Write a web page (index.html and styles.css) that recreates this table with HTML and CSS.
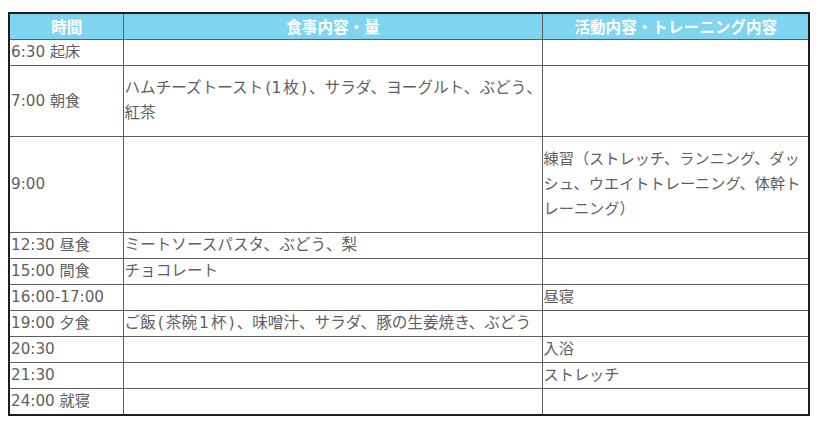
FILE: index.html
```html
<!DOCTYPE html>
<html lang="ja">
<head>
<meta charset="utf-8">
<link rel="stylesheet" href="styles.css">
</head>
<body>
<table class="schedule">
  <colgroup>
    <col class="c-time">
    <col class="c-meal">
    <col class="c-act">
  </colgroup>
  <thead>
    <tr class="head">
      <th>時間</th>
      <th>食事内容・量</th>
      <th>活動内容・トレーニング内容</th>
    </tr>
  </thead>
  <tbody>
    <tr><td>6:30 起床</td><td></td><td></td></tr>
    <tr class="tall2"><td>7:00 朝食</td><td>ハムチーズトースト<span class="hw">(1</span>枚<span class="hw">)</span>、サラダ、ヨーグルト、ぶどう、<br>紅茶</td><td></td></tr>
    <tr class="tall3"><td>9:00</td><td></td><td>練習（ストレッチ、ランニング、ダッ<br>シュ、ウエイトトレーニング、体幹ト<br>レーニング）</td></tr>
    <tr><td>12:30 昼食</td><td>ミートソースパスタ、ぶどう、梨</td><td></td></tr>
    <tr><td>15:00 間食</td><td>チョコレート</td><td></td></tr>
    <tr><td>16:00-17:00</td><td></td><td>昼寝</td></tr>
    <tr><td>19:00 夕食</td><td>ご飯<span class="hw">(</span>茶碗<span class="hw">1</span>杯<span class="hw">)</span>、味噌汁、サラダ、豚の生姜焼き、ぶどう</td><td></td></tr>
    <tr><td>20:30</td><td></td><td>入浴</td></tr>
    <tr><td>21:30</td><td></td><td>ストレッチ</td></tr>
    <tr><td>24:00 就寝</td><td></td><td></td></tr>
  </tbody>
</table>
</body>
</html>
```

FILE: styles.css
```css
html, body {
  margin: 0;
  padding: 0;
  background: #ffffff;
}

body {
  padding: 12px 0 0 8px;
  font-family: "DejaVu Sans", "Noto Sans CJK JP", sans-serif;
  color: #5f5f5f;
}

.schedule {
  border-collapse: collapse;
  table-layout: fixed;
  width: 800px;
  border: 2px solid #1e1e1e;
  font-size: 15.2px;
  line-height: 25px;
}

.c-time { width: 114px; }
.c-meal { width: 419px; }
.c-act { width: 267px; }

.schedule th,
.schedule td {
  border: 1px solid #5e5e5e;
  padding: 0 0 0 1px;
  height: 25px;
  vertical-align: middle;
  text-align: left;
  white-space: nowrap;
  overflow: hidden;
}

.schedule td:nth-child(2) {
  font-size: 15.6px;
}

.hw {
  padding: 0 2px;
}

.schedule .head th {
  height: 24px;
  background: #7fd4ef;
  color: #ffffff;
  font-family: "Noto Sans CJK JP", sans-serif;
  font-weight: bold;
  text-align: center;
  font-size: 15.6px;
  border-top: 2px solid #1e1e1e;
}

.schedule .tall2 td { height: 70px; }
.schedule .tall3 td { height: 95px; }
```
